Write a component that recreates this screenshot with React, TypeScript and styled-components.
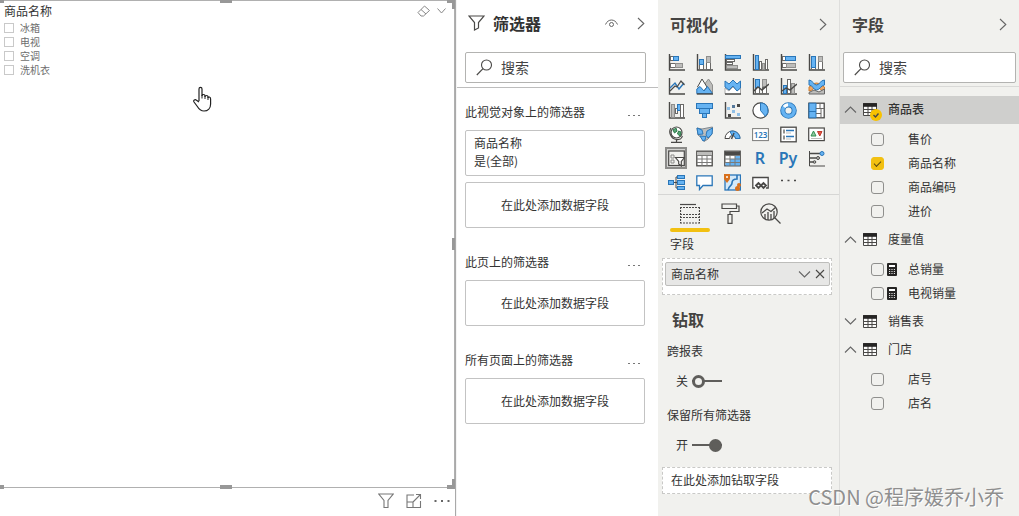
import React, { useState } from "react";
import styled, { createGlobalStyle, css } from "styled-components";

const INK = "#4a4947";
const GRAY = "#bdbdbb";
const BLUE = "#66b3f2";
const NAVY = "#2a76b8";
const YELLOW = "#f2c011";

const GlobalStyle = createGlobalStyle`
  *, *::before, *::after { box-sizing: border-box; }
  body {
    margin: 0;
    background: #fff;
    color: #333;
    font: 12px/18px "Noto Sans CJK SC", "Noto Sans", sans-serif;
  }
  h2, h3, p { margin: 0; padding: 0; font-size: 12px; font-weight: 400; }
  button, input { font: inherit; color: inherit; }
`;

/* ---------- shared parts ---------- */

const Page = styled.div`
  position: relative;
  display: grid;
  grid-template-columns: minmax(0, 1fr) 202px 181px 180px;
  min-height: 100vh;
`;

const IconButton = styled.button<{ $size?: number }>`
  display: inline-flex;
  align-items: center;
  justify-content: center;
  flex: none;
  width: ${(p) => p.$size ?? 16}px;
  height: ${(p) => p.$size ?? 16}px;
  padding: 0;
  border: 0;
  background: none;
`;

const PaneTitle = styled.h2`
  font-size: 16px;
  line-height: 24px;
  font-weight: 700;
`;

const PaneHeader = styled.header<{ $compact?: boolean }>`
  display: flex;
  align-items: center;
  height: ${(p) => (p.$compact ? 50 : 52)}px;
  padding: 0 8px ${(p) => (p.$compact ? 2 : 4)}px 12px;
  color: #454442;
  ${PaneTitle} { flex: 1; }
`;

const SearchBox = styled.label`
  display: flex;
  align-items: center;
  gap: 8px;
  height: 31px;
  padding-left: 10px;
  border: 1px solid #b3b3b1;
  border-radius: 2px;
  background: #fff;
  input {
    flex: 1;
    min-width: 0;
    padding: 0 0 2px;
    border: 0;
    outline: 0;
    background: none;
    font-size: 14px;
    line-height: 20px;
  }
  input::placeholder { color: #444; opacity: 1; }
`;

type DrawProps = { w: number; h?: number; children: React.ReactNode };
const Draw = ({ w, h = w, children }: DrawProps) => (
  <svg width={w} height={h} viewBox={`0 0 ${w} ${h}`} fill="none" stroke={INK} aria-hidden="true">
    {children}
  </svg>
);

const Chevron = ({ dir }: { dir: "up" | "down" | "right" }) => {
  const shapes = {
    up: [13, 7, "M1 6.5L6.5 1 12 6.5"],
    down: [13, 7, "M1 .5L6.5 6 12 .5"],
    right: [8, 13, "M1 1L6.8 6.5 1 12"],
  } as const;
  const [w, h, d] = shapes[dir];
  return (
    <Draw w={w} h={h}>
      <path d={d} stroke="#666" strokeWidth="1.1" />
    </Draw>
  );
};

const Search = ({ name }: { name: string }) => (
  <SearchBox>
    <Draw w={17}>
      <circle cx="10.5" cy="6" r="5" strokeWidth="1.1" />
      <path d="M7 9.7L.8 16" strokeWidth="1.2" />
    </Draw>
    <input type="text" placeholder="搜索" aria-label={name} />
  </SearchBox>
);

/* ---------- report canvas ---------- */

const Canvas = styled.main`
  display: flex;
  flex-direction: column;
  border-right: 1px solid #a9a9a9;
`;

const Visual = styled.section`
  position: relative;
  flex: 1;
  padding: 2px 8px 0 4px;
  border: solid #b0b0b0;
  border-width: 1px 1px 1px 0;
`;

const Handle = styled.span<{ $x: "left" | "mid" | "right"; $y: "top" | "mid" | "bottom" }>`
  position: absolute;
  background: #989898;
  width: ${(p) => (p.$x === "mid" ? 12 : p.$y === "mid" ? 3 : 8)}px;
  height: ${(p) => (p.$y === "mid" ? 12 : 4)}px;
  ${(p) => (p.$x === "mid" ? "left: calc(50% - 7px);" : `${p.$x}: -1px;`)}
  ${(p) => (p.$y === "mid" ? "top: calc(50% - 6px);" : `${p.$y}: -2px;`)}
  ${(p) =>
    p.$x === "right" &&
    p.$y !== "mid" &&
    css`
      &::after {
        content: "";
        position: absolute;
        right: 0;
        ${p.$y}: 0;
        width: 3px;
        height: 10px;
        background: inherit;
      }
    `}
  ${(p) => p.$x === "left" && "width: 5px;"}
`;

const VisualHeader = styled.div`
  display: flex;
  align-items: center;
  height: 16px;
  h3 { flex: 1; line-height: 16px; }
  button:last-child { margin-right: -3px; }
  button { margin-left: 1px; }
`;

const SlicerItem = styled.label`
  display: flex;
  align-items: center;
  gap: 6px;
  height: 14px;
  font-size: 10px;
  line-height: 14px;
  color: #6e6e6e;
  input {
    appearance: none;
    width: 10px;
    height: 10px;
    margin: 0;
    border: 1px solid #c9c9c9;
  }
`;

const SlicerList = styled.div`
  padding-top: 2px;
`;

const Pointer = styled.span`
  position: absolute;
  left: 193px;
  top: 85px;
`;

const VisualTools = styled.div`
  display: flex;
  justify-content: flex-end;
  gap: 12px;
  height: 28px;
  padding: 5px 5px 0 0;
`;

/* ---------- filters pane ---------- */

const FiltersPane = styled.aside`
  background: #fff;
  border-left: 1px solid #f4f4f4;
`;

const FilterHeader = styled.header`
  display: flex;
  align-items: center;
  height: 52px;
  padding: 0 10px 6px 11px;
  ${PaneTitle} { flex: 1; padding-left: 8px; }
  button + button { margin-left: 15px; }
`;

const SearchArea = styled.div<{ $wide?: boolean }>`
  padding: ${(p) => (p.$wide ? "0 3px 3px" : "0 12px 4px 8px")};
  border-bottom: 1px solid ${(p) => (p.$wide ? "#d9d9d7" : "#bdbdbd")};
`;

const FilterBody = styled.div`
  display: flex;
  flex-direction: column;
  gap: 25px;
  padding: 15px 13px 0 8px;
`;

const FilterGroup = styled.section`
  display: flex;
  flex-direction: column;
  gap: 6px;
`;

const GroupHead = styled.div`
  display: flex;
  align-items: flex-start;
  height: 21px;
  h3 { flex: 1; }
  button { margin: 4px 3px 0 0; }
`;

const FilterCard = styled.div<{ $drop?: boolean }>`
  height: 46px;
  padding: 3px 8px;
  border: 1px solid #c3c3c3;
  border-radius: 2px;
  ${(p) => p.$drop && "padding: 13px 8px; text-align: center;"}
`;

/* ---------- visualizations pane ---------- */

const VizPane = styled.aside`
  background: #f1f1ee;
`;

const VizGrid = styled.div`
  display: grid;
  grid-template-columns: repeat(6, 28px);
  grid-auto-rows: 24px;
  place-items: center;
  padding-left: 4px;
  border-bottom: 1px solid #d6d6d4;
`;

const VizButton = styled.button<{ $on?: boolean }>`
  display: flex;
  align-items: center;
  justify-content: center;
  width: 22px;
  height: 22px;
  padding: 0;
  border: ${(p) => (p.$on ? "2px solid #8b8b89" : "0")};
  background: ${(p) => (p.$on ? "#d3d3d1" : "none")};
  color: ${NAVY};
  font: 600 16px/20px "Noto Sans", sans-serif;
`;

const TabRow = styled.div`
  display: flex;
  padding-left: 12px;
`;

const Tab = styled.button<{ $on?: boolean }>`
  display: flex;
  justify-content: center;
  width: 40px;
  height: 37px;
  padding: 8px 0 0;
  border: 0;
  background: none;
  position: relative;
  &::after {
    content: "";
    position: absolute;
    inset: auto 0 0 0;
    height: 4px;
    border-radius: 2px;
    background: ${(p) => (p.$on ? YELLOW : "transparent")};
  }
`;

const WellLabel = styled.h3`
  padding: 3px 12px 5px;
`;

const Well = styled.div<{ $empty?: boolean }>`
  height: ${(p) => (p.$empty ? 27 : 37)}px;
  margin: 0 7px 0 4px;
  padding: ${(p) => (p.$empty ? "3px 8px" : "3px 1px 0 2px")};
  border: 1px dashed #c9c9c7;
  background: #fff;
`;

const Chip = styled.div`
  display: flex;
  align-items: center;
  height: 24px;
  padding: 0 1px 0 5px;
  border: 1px solid #bdbdbb;
  border-radius: 2px;
  background: #e7e7e6;
  span { flex: 1; }
`;

const DrillTitle = styled(PaneTitle)`
  padding: 12px 14px 8px;
  color: #454442;
`;

const DrillLabel = styled.h3`
  padding: 3px 9px 0;
`;

const ToggleRow = styled.label`
  display: flex;
  align-items: center;
  gap: 4px;
  height: 18px;
  margin: 12px 18px 13px;
`;

const Toggle = styled.input`
  appearance: none;
  position: relative;
  width: 30px;
  height: 13px;
  margin: 0;
  background: linear-gradient(#5f5e5b, #5f5e5b) center / 100% 2px no-repeat;
  &::before {
    content: "";
    position: absolute;
    left: 0;
    width: 13px;
    height: 13px;
    border: 3px solid #5f5e5b;
    border-radius: 50%;
    background: #f1f1ee;
  }
  &:checked::before {
    left: auto;
    right: 0;
    background: #5f5e5b;
  }
`;

/* ---------- fields pane ---------- */

const FieldsPane = styled.aside`
  background: #f1f1ee;
  border-left: 1px solid #dededc;
`;

const Tree = styled.div`
  padding-top: 9px;
`;

const TableRow = styled.button<{ $on?: boolean }>`
  display: flex;
  align-items: center;
  width: 100%;
  height: 28px;
  padding: 0 0 2px 4px;
  border: 0;
  background: ${(p) => (p.$on ? "#cfcfcd" : "none")};
  font-weight: ${(p) => (p.$on ? 500 : 400)};
  text-align: left;
`;

const TableIconBox = styled.span`
  position: relative;
  display: flex;
  width: 14px;
  margin: 0 11px 0 6px;
`;

const UsedBadge = styled.span`
  position: absolute;
  left: 7px;
  top: 6px;
  display: flex;
`;

const FieldList = styled.div`
  padding: 3px 0;
`;

const FieldRow = styled.label`
  display: grid;
  grid-template-columns: 13px 18px 1fr;
  align-items: center;
  column-gap: 3px;
  height: 24px;
  padding-left: 31px;
`;

const FieldName = styled.span`
  grid-column: 3;
`;

const Check = styled.input`
  appearance: none;
  width: 13px;
  height: 13px;
  margin: 0;
  border: 1px solid #8f8f8d;
  border-radius: 3px;
  display: grid;
  place-items: center;
  &:checked {
    border-color: ${YELLOW};
    background: ${YELLOW};
  }
  &:checked::after {
    content: "";
    width: 7px;
    height: 4px;
    border: solid #5b4a10;
    border-width: 0 0 1px 1px;
    transform: rotate(-45deg);
  }
`;

const Watermark = styled.div`
  position: absolute;
  right: 15px;
  bottom: 4px;
  font-size: 20px;
  line-height: 30px;
  font-weight: 400;
  color: #8f8f8f;
  text-shadow: 1px 1px 0 #fff;
  white-space: nowrap;
  pointer-events: none;
`;

/* ---------- visual type drawings, each on a 17-unit square ---------- */

const Axes = () => <path d="M1.5 0V16H17" strokeWidth="1.4" />;
const Frame = () => <rect x=".8" y="1.2" width="15.4" height="14.6" fill="#fff" strokeWidth="1.3" />;

type Bar = [x: number, y: number, w: number, h: number, fill: "b" | "g" | "w"];
const Bars = ({ list }: { list: Bar[] }) => (
  <>
    {list.map(([x, y, w, h, f], i) => (
      <rect
        key={i}
        x={x + 0.5}
        y={y + 0.5}
        width={w - 1}
        height={h - 1}
        fill={f === "b" ? BLUE : f === "g" ? GRAY : "#fff"}
        stroke={f === "b" ? NAVY : f === "g" ? "#8f8f8d" : "#6a6967"}
      />
    ))}
  </>
);

const Grid3 = () => <path d="M1 5.5H16M1 9H16M1 12.5H16M6 5V16M11 5V16" stroke="#7b7b79" />;

const vizTypes: { name: string; art: React.ReactNode }[] = [
  { name: "堆积条形图", art: <><Axes /><Bars list={[[2, 2, 4, 5, "w"], [5, 2, 6, 5, "b"], [2, 9, 6, 5, "w"], [7, 9, 8, 5, "g"]]} /></> },
  { name: "堆积柱形图", art: <><Axes /><Bars list={[[3, 10, 5, 6, "w"], [3, 5, 5, 6, "b"], [10, 8, 5, 8, "w"], [10, 2, 5, 7, "g"]]} /></> },
  { name: "簇状条形图", art: <><Axes /><Bars list={[[1, 1, 16, 4, "b"], [2, 5, 9, 3, "w"], [2, 8, 7, 3, "w"], [2, 11, 12, 4, "g"]]} /></> },
  { name: "簇状柱形图", art: <><Axes /><Bars list={[[3, 1, 4, 15, "b"], [7, 7, 3, 9, "w"], [10, 9, 3, 7, "g"], [13, 5, 3, 11, "w"]]} /></> },
  { name: "百分比堆积条形图", art: <><Axes /><Bars list={[[2, 2, 4, 5, "w"], [5, 2, 11, 5, "b"], [2, 9, 5, 5, "w"], [6, 9, 10, 5, "g"]]} /></> },
  { name: "百分比堆积柱形图", art: <><Axes /><Bars list={[[3, 11, 5, 5, "w"], [3, 2, 5, 12, "b"], [10, 7, 5, 9, "w"], [10, 2, 5, 6, "g"]]} /></> },
  { name: "折线图", art: <><Axes /><path d="M2 10L7 5 11 11 16 5" stroke={NAVY} strokeWidth="1.4" /><path d="M2 13L7 8 9 9 13 3 16.500 7" strokeWidth="1.2" /></> },
  { name: "分区图", art: <><path d="M8 7L12.500 1 16.500 7V15.500H9Z" fill={GRAY} stroke="#8f8f8d" /><path d="M1.500 9L6 1 11 9 7 14Z" fill="#fff" /><path d="M.8 11L4 8.500 8 13 11.500 8.500 16.500 15.500H.8Z" fill={BLUE} stroke={NAVY} /><path d="M.8 16H17" strokeWidth="1.4" /></> },
  { name: "堆积面积图", art: <><path d="M1 10L5 13 9 9 13 13 16.500 10V16H1Z" fill="#fff" stroke="#aaa" /><path d="M1 3L5 6 9 2 13 6 16.500 3V10L13 13 9 8 5 12 1 9Z" fill={BLUE} stroke={NAVY} /><path d="M1 16H17" strokeWidth="1.400" /></> },
  { name: "折线和堆积柱形图", art: <><Axes /><Bars list={[[3, 9, 5, 7, "w"], [3, 1, 5, 9, "b"], [10, 9, 5, 7, "w"], [10, 1, 5, 8, "g"]]} /><path d="M2 13L6 9 10 12 17 6" strokeWidth="1.4" /></> },
  { name: "折线和簇状柱形图", art: <><Axes /><Bars list={[[3, 7, 4, 9, "b"], [7, 1, 4, 15, "w"], [11, 5, 4, 11, "g"]]} /><path d="M2 13L6 10 10 12 17 6" strokeWidth="1.4" /></> },
  { name: "功能区图表", art: <><path d="M1 9C4 8 5 5 8.500 5S13 8 16.500 9V13C12 13 12 9 8.500 9S5 13 1 13Z" fill="#eea868" stroke="#cf7c2c" /><path d="M1 2C5 2 5 7 8.500 7S12 2 16.500 2V7C13 7 12 12 8.500 12S5 7 1 7Z" fill={BLUE} stroke={NAVY} /><path d="M1 14.500L6 12 11 14 16.500 11V16H1Z" fill={GRAY} stroke="#666" /></> },
  { name: "瀑布图", art: <><Axes /><Bars list={[[3, 2, 4, 14, "g"], [7, 6, 3, 6, "w"], [9, 2, 4, 7, "b"], [12, 2, 4, 14, "w"]]} /></> },
  { name: "漏斗图", art: <Bars list={[[0, 1, 17, 6, "b"], [3, 6, 11, 6, "b"], [6, 11, 5, 5, "b"]]} /> },
  { name: "散点图", art: <><Axes /><g stroke="none"><path d="M3 5h3v3H3zM8 8h3v3H8zM13 11h3v3h-3z" fill="#8fbfe6" /><path d="M8 3h3v3H8z" fill="#55789a" /><path d="M13 2h3v3h-3zM4 12h3v3H4z" fill={INK} /></g></> },
  { name: "饼图", art: <><circle cx="8.500" cy="8.500" r="7.600" fill="#fff" strokeWidth="1.200" /><path d="M8.500 .9A7.600 7.600 0 0 1 13.400 14.300L8.500 8.500Z" fill={BLUE} stroke={NAVY} /></> },
  { name: "环形图", art: <><circle cx="8.500" cy="8.500" r="5.700" stroke={NAVY} strokeWidth="5.200" /><circle cx="8.500" cy="8.500" r="5.700" stroke={BLUE} strokeWidth="3.400" /><path d="M4 5A5.700 5.700 0 0 1 8 2.800" stroke="#fff" strokeWidth="3" /></> },
  { name: "树状图", art: <><Frame /><path d="M1 1.200H8V15.800H1Z" fill={BLUE} stroke={NAVY} /><path d="M1 9.500H8" stroke={NAVY} /><path d="M8 6.500H16M8 11.500H13M12 1V6.500M13 6.500V16" stroke="#6a6967" /></> },
  { name: "地图", art: <><circle cx="8.500" cy="6.500" r="5.500" fill="#fff" strokeWidth="1.200" /><path d="M5 4L8 2 9 5 6.500 7ZM10.500 5L13 6 12 10 9.500 8Z" fill="#58a476" stroke="#2d7a4a" /><path d="M3 2C0 6 3 13 8.500 13.500S13 12 14.500 10M8.500 13.500V16M3 16.300H14" strokeWidth="1.200" /></> },
  { name: "着色地图", art: <><path d="M1 2L6 3 11 2 16.500 1 16 8 12 13 8 15.500 6 12 2 9Z" fill={GRAY} stroke="#7f8890" /><path d="M1 2L6 4 7 8 2 8.500ZM11 5L16.500 2 16 8 12 12 10 9ZM4 10L10 10.500 9 14 7 15Z" fill={BLUE} stroke={NAVY} /></> },
  { name: "仪表", art: <><path d="M1 12.500A7.500 7.500 0 0 1 16 12.500H11.500A3 3 0 0 0 5.500 12.500Z" fill="#fff" /><path d="M6 5.500A7.500 7.500 0 0 1 16 12.500H11.500A3 3 0 0 0 8 9.500Z" fill={BLUE} stroke={NAVY} /><path d="M7.500 13L10 7" strokeWidth="1.500" /></> },
  { name: "卡片图", art: <><rect x=".6" y="2.600" width="15.800" height="12" fill="#fff" stroke="#7b7b79" /><text x="8.500" y="12" textAnchor="middle" fontSize="8" fontFamily="Noto Sans, sans-serif" fill={NAVY} stroke="none">123</text></> },
  { name: "多行卡", art: <><Frame /><path d="M4 3.500V7.500M4 9.500V13.500" strokeWidth="1.200" /><path d="M6 4.500H14M6 10.500H14" stroke={NAVY} strokeWidth="1.500" /><path d="M6 7H11M6 13H11" stroke={GRAY} /></> },
  { name: "KPI", art: <><rect x=".7" y="2" width="15.600" height="12.600" fill="#fff" strokeWidth="1.200" /><path d="M3 10L5.500 5 8 10Z" fill="#8fc6a0" stroke="#2f8f50" /><path d="M9.500 5.500H14L11.800 10Z" fill="#e05a4a" stroke="#c33a2c" /><path d="M3 12.500H14" stroke={GRAY} /></> },
  { name: "切片器", art: <><rect x=".7" y="1" width="15.600" height="14.500" fill="#f1f1ee" strokeWidth="1.200" /><path d="M3 5h3v3H3zM3 10h3v3H3z" stroke="#8a8a88" /><path d="M7.500 7.500H16.500L13.300 11.500V16L10.700 14V11.500Z" fill="#fff" strokeWidth="1.200" /></> },
  { name: "表", art: <><Frame /><path d="M1 2H16V5H1Z" fill={GRAY} stroke="none" /><Grid3 /></> },
  { name: "矩阵", art: <><Frame /><path d="M1 2H16V5H1Z" fill={INK} stroke="none" /><path d="M11 5H16V15.500H1.500V12H6V9H11Z" fill={BLUE} stroke="none" /><Grid3 /></> },
  { name: "R 脚本视觉对象", art: "R" },
  { name: "Python 视觉对象", art: "Py" },
  { name: "关键影响者", art: <><path d="M1.500 1V16H17" /><path d="M2 3.500H12M2 8H8M2 12H5" strokeWidth="1.300" /><circle cx="14" cy="3.500" r="2" fill={BLUE} stroke={NAVY} /><circle cx="10" cy="8" r="1.500" fill={GRAY} /><circle cx="6.500" cy="12" r="1.300" fill={GRAY} /></> },
  { name: "分解树", art: <><path d="M5 8.500H11M8 3V14M8 3H11M8 14H11" /><Bars list={[[0, 6, 6, 5, "b"], [9, 1, 8, 4, "b"], [9, 6, 8, 5, "b"], [9, 12, 8, 4, "b"]]} /></> },
  { name: "问答", art: <path d="M.8 1.800H16.200V11.500H7L3.500 15.500V11.500H.8Z" fill="#fff" stroke={NAVY} strokeWidth="1.300" /> },
  { name: "ArcGIS Maps", art: <><rect x="1" y="1" width="15.500" height="15" fill="#d5e9f8" stroke={NAVY} strokeWidth="1.300" /><path d="M4 16C5 11 8 12 8 9S10 5 13 5V1" stroke={NAVY} strokeWidth="1.600" /><path d="M0 0H6V5L3 9 0 5Z" fill="#d8701c" stroke="none" /><circle cx="3" cy="3" r="1" fill="#fff" stroke="none" /><circle cx="15" cy="11" r="2" fill="#d8701c" stroke="none" /><circle cx="13.500" cy="14.500" r="2.500" fill="#d8701c" stroke="none" /></> },
  { name: "Power Apps", art: <><path d="M3 14H.8V3.500H16.200V14H14" strokeWidth="1.300" fill="#fff" /><path d="M4 11.500L6.500 9 9 11.500 6.500 14ZM9 11.500L11.500 9 14 11.500 11.500 14Z" strokeWidth="1.800" /></> },
  { name: "获取更多视觉对象", art: <path d="M1 6.500h2M7.500 6.500h2M14 6.500h2" strokeWidth="1.500" /> },
];

const Dots = () => (
  <Draw w={12} h={4}>
    <path d="M0 2.500h2M5 2.500h2M10 2.500h2" stroke="#777" />
  </Draw>
);

const TableGlyph = () => (
  <Draw w={14} h={13}>
    <path d="M.5.5H13.500V12.500H.5ZM.5 6.500H13.500M.5 9.500H13.500M5 3V12.500M9 3V12.500" fill="#fbfbfa" />
    <path d="M0 2H14" strokeWidth="3.600" stroke="#252423" />
  </Draw>
);

const MeasureGlyph = () => (
  <Draw w={10} h={13}>
    <rect x="0" y="0" width="10" height="13" rx="1" fill="#252423" stroke="none" />
    <path d="M2 3H8" stroke="#fff" strokeWidth="2" />
    <path d="M2 6.500H8M2 8.500H8M2 10.500H8" stroke="#ddd" strokeDasharray="1.200 1.200" />
  </Draw>
);

/* ---------- data ---------- */

type Field = { name: string; checked?: boolean; measure?: boolean };
const tables: { name: string; open: boolean; used?: boolean; fields: Field[] }[] = [
  { name: "商品表", open: true, used: true, fields: [{ name: "售价" }, { name: "商品名称", checked: true }, { name: "商品编码" }, { name: "进价" }] },
  { name: "度量值", open: true, fields: [{ name: "总销量", measure: true }, { name: "电视销量", measure: true }] },
  { name: "销售表", open: false, fields: [] },
  { name: "门店", open: true, fields: [{ name: "店号" }, { name: "店名" }] },
];

const filterGroups = [
  { title: "此视觉对象上的筛选器", applied: true },
  { title: "此页上的筛选器" },
  { title: "所有页面上的筛选器" },
];

const DrillToggle = ({ title, initial }: { title: string; initial: boolean }) => {
  const [on, setOn] = useState(initial);
  return (
    <>
      <DrillLabel>{title}</DrillLabel>
      <ToggleRow>
        {on ? "开" : "关"}
        <Toggle type="checkbox" aria-label={title} checked={on} onChange={() => setOn(!on)} />
      </ToggleRow>
    </>
  );
};

export default function App() {
  return (
    <>
      <GlobalStyle />
      <Page>
        <Canvas>
          <Visual>
            <VisualHeader>
              <h3>商品名称</h3>
              <IconButton aria-label="清除选择">
                <Draw w={14} h={12}>
                  <path d="M1 7.500L7.500 1 12.500 5.500 6.500 11H4ZM4 4.500L9 9" stroke="#888" />
                </Draw>
              </IconButton>
              <IconButton aria-label="更多">
                <Draw w={9} h={6}>
                  <path d="M.5.5L4.500 5 8.500.5" stroke="#888" />
                </Draw>
              </IconButton>
            </VisualHeader>
            <SlicerList>
              {["冰箱", "电视", "空调", "洗机衣"].map((item) => (
                <SlicerItem key={item}>
                  <input type="checkbox" />
                  {item}
                </SlicerItem>
              ))}
            </SlicerList>
            <Handle $x="left" $y="top" />
            <Handle $x="mid" $y="top" />
            <Handle $x="right" $y="top" />
            <Handle $x="right" $y="mid" />
            <Handle $x="left" $y="bottom" />
            <Handle $x="mid" $y="bottom" />
            <Handle $x="right" $y="bottom" />
            <Pointer>
              <Draw w={19} h={26}>
                <path
                  d="M6 15V3C6 .8 9 .8 9 3V10C9 8 12 8 12 10V11C12 9 15 9 15 11V12C15 10.500 17.600 10.500 17.600 13V18C17.600 22 15 25 11 25C7 25 5.500 22.500 4 20L1 16C0 14.500 2 13 3.500 14.200L6 16"
                  fill="#fff"
                  stroke="#222"
                  strokeWidth="1.200"
                />
                <path d="M9 9V12.500M12 10V13M15 11V14" stroke="#222" />
              </Draw>
            </Pointer>
          </Visual>
          <VisualTools>
            <IconButton aria-label="筛选器">
              <Draw w={16}>
                <path d="M.8 1H15.200L10 7.500V14.500H6V7.500Z" stroke="#777" strokeWidth="1.100" />
              </Draw>
            </IconButton>
            <IconButton aria-label="焦点模式">
              <Draw w={16}>
                <path d="M8 2H1V14.500H14.500V8M1 9H7V14.500M7 9L14.500 1.500M10 1.500H14.500V6" stroke="#777" strokeWidth="1.100" />
              </Draw>
            </IconButton>
            <IconButton aria-label="更多选项">
              <Draw w={16}>
                <path d="M.5 8h2M7 8h2M13.500 8h2" stroke="#666" strokeWidth="2" />
              </Draw>
            </IconButton>
          </VisualTools>
        </Canvas>

        <FiltersPane>
          <FilterHeader>
            <Draw w={17} h={16}>
              <path d="M.9 1H16.100L10.500 7.500V13L6.500 15V7.500Z" strokeWidth="1.200" />
            </Draw>
            <PaneTitle>筛选器</PaneTitle>
            <IconButton aria-label="显示或隐藏">
              <Draw w={13} h={9}>
                <path d="M.5 5.500C3-.5 10-.5 12.500 5.500" stroke="#666" />
                <circle cx="6.500" cy="5.500" r="2" stroke="#666" />
              </Draw>
            </IconButton>
            <IconButton $size={14} aria-label="折叠筛选器">
              <Chevron dir="right" />
            </IconButton>
          </FilterHeader>
          <SearchArea>
            <Search name="搜索筛选器" />
          </SearchArea>
          <FilterBody>
            {filterGroups.map((g) => (
              <FilterGroup key={g.title}>
                <GroupHead>
                  <h3>{g.title}</h3>
                  <IconButton aria-label="更多">
                    <Dots />
                  </IconButton>
                </GroupHead>
                {g.applied && (
                  <FilterCard>
                    <p>商品名称</p>
                    <p>是(全部)</p>
                  </FilterCard>
                )}
                <FilterCard $drop>在此处添加数据字段</FilterCard>
              </FilterGroup>
            ))}
          </FilterBody>
        </FiltersPane>

        <VizPane>
          <PaneHeader $compact>
            <PaneTitle>可视化</PaneTitle>
            <IconButton aria-label="折叠可视化">
              <Chevron dir="right" />
            </IconButton>
          </PaneHeader>
          <VizGrid>
            {vizTypes.map(({ name, art }) => (
              <VizButton key={name} aria-label={name} $on={name === "切片器"}>
                {typeof art === "string" ? art : <Draw w={17}>{art}</Draw>}
              </VizButton>
            ))}
          </VizGrid>
          <TabRow role="tablist">
            <Tab role="tab" aria-selected="true" aria-label="字段" $on>
              <Draw w={20} h={21}>
                <path d="M0 1.500H16" strokeWidth="1.200" />
                <path d="M0 4.500H20M0 11.500H20M0 14.500H20M0 20H20M.5 4V20M19.500 4V20" strokeDasharray="2 1" strokeWidth="1.200" />
              </Draw>
            </Tab>
            <Tab role="tab" aria-selected="false" aria-label="格式">
              <Draw w={19} h={21}>
                <path d="M1 1H15.500V5.500H1ZM15.500 3H18V8.500H9V11.500M7 11.500H11V20.300H7Z" strokeWidth="1.200" />
              </Draw>
            </Tab>
            <Tab role="tab" aria-selected="false" aria-label="分析">
              <Draw w={21} h={21}>
                <circle cx="9" cy="9" r="8.200" strokeWidth="1.200" />
                <path d="M15 15L20.500 20.500M2 10L7 6 11 8.500 16 4M5 16V11M8 17V9M11 17V11M14 15V8" strokeWidth="1.300" />
              </Draw>
            </Tab>
          </TabRow>
          <WellLabel>字段</WellLabel>
          <Well>
            <Chip>
              <span>商品名称</span>
              <IconButton aria-label="字段选项">
                <Chevron dir="down" />
              </IconButton>
              <IconButton aria-label="删除字段">
                <Draw w={10}>
                  <path d="M1 1L9 9M9 1L1 9" strokeWidth="1.100" />
                </Draw>
              </IconButton>
            </Chip>
          </Well>
          <DrillTitle>钻取</DrillTitle>
          <DrillToggle title="跨报表" initial={false} />
          <DrillToggle title="保留所有筛选器" initial />
          <Well $empty>在此处添加钻取字段</Well>
        </VizPane>

        <FieldsPane>
          <PaneHeader>
            <PaneTitle>字段</PaneTitle>
            <IconButton aria-label="折叠字段">
              <Chevron dir="right" />
            </IconButton>
          </PaneHeader>
          <SearchArea $wide>
            <Search name="搜索字段" />
          </SearchArea>
          <Tree>
            {tables.map((t) => (
              <React.Fragment key={t.name}>
                <TableRow $on={t.used} aria-expanded={t.open}>
                  <Chevron dir={t.open ? "up" : "down"} />
                  <TableIconBox>
                    <TableGlyph />
                    {t.used && (
                      <UsedBadge>
                        <Draw w={12}>
                          <circle cx="6" cy="6" r="6" fill="#f8c200" stroke="none" />
                          <path d="M3.500 6L5.500 8 8.500 4.500" strokeWidth="1.400" />
                        </Draw>
                      </UsedBadge>
                    )}
                  </TableIconBox>
                  {t.name}
                </TableRow>
                {t.open && (
                  <FieldList>
                    {t.fields.map((f) => (
                      <FieldRow key={f.name}>
                        <Check type="checkbox" defaultChecked={f.checked} />
                        {f.measure && <MeasureGlyph />}
                        <FieldName>{f.name}</FieldName>
                      </FieldRow>
                    ))}
                  </FieldList>
                )}
              </React.Fragment>
            ))}
          </Tree>
        </FieldsPane>

        <Watermark>CSDN @程序媛乔小乔</Watermark>
      </Page>
    </>
  );
}
